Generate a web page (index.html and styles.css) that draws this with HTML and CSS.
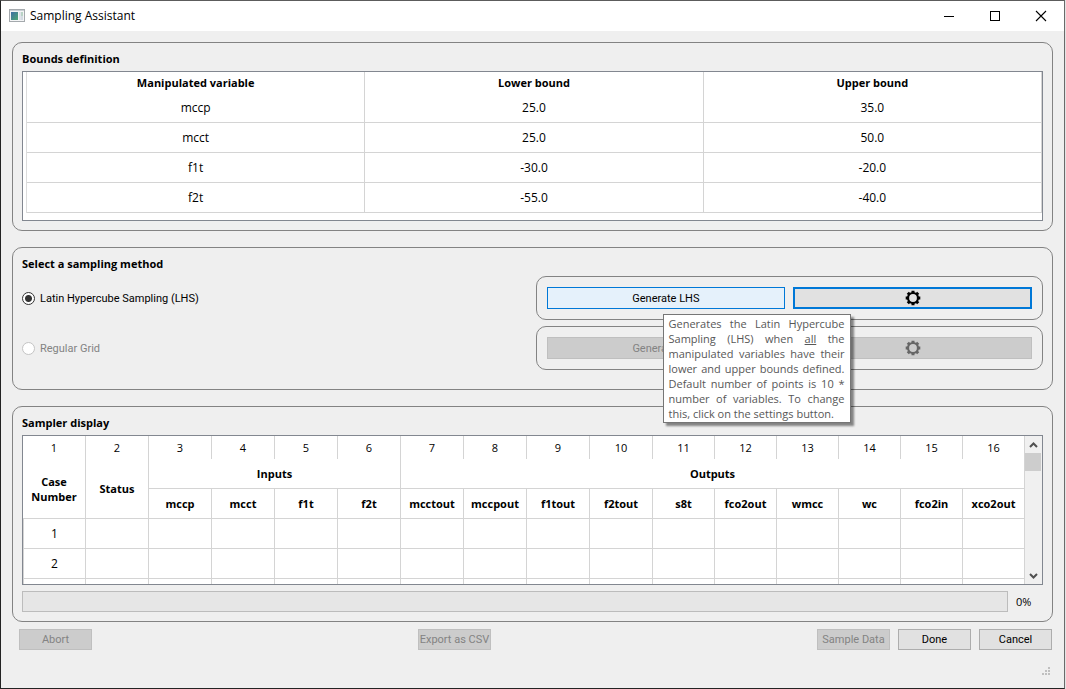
FILE: index.html
```
<!DOCTYPE html>
<html lang="en">
<head>
<meta charset="utf-8">
<title>Sampling Assistant</title>
<link rel="stylesheet" href="styles.css">
</head>
<body>
<div class="window">
  <header class="titlebar">
    <svg class="app-icon" width="16" height="14" viewBox="0 0 16 14" aria-hidden="true">
      <defs><linearGradient id="pane" x1="0" y1="0" x2="1" y2="1"><stop offset="0" stop-color="#3f6fa5"/><stop offset="1" stop-color="#4fa872"/></linearGradient></defs>
      <rect x=".5" y=".5" width="15" height="12" fill="#f4f5f6" stroke="#a4a9ad"/>
      <path d="M1 1.5h14" stroke="#c9cfd4"/>
      <rect x="2" y="3" width="7" height="8" fill="url(#pane)"/>
      <rect x="10" y="3" width="2" height="8" fill="#dfe4ea"/>
      <rect x="12" y="3" width="2" height="4" fill="#b9d3c6"/>
      <rect x="12" y="7" width="2" height="4" fill="#d4dbe3"/>
    </svg>
    <h1 class="title">Sampling Assistant</h1>
    <div class="window-controls">
      <button class="win-btn" aria-label="Minimize"><svg width="12" height="12" viewBox="0 0 12 12"><path d="M1 6.5h10" stroke="#000"/></svg></button>
      <button class="win-btn" aria-label="Maximize"><svg width="12" height="12" viewBox="0 0 12 12"><rect x="1.500" y="1.500" width="9" height="9" fill="none" stroke="#000"/></svg></button>
      <button class="win-btn" aria-label="Close"><svg width="12" height="12" viewBox="0 0 12 12"><path d="M1 1l10 10M11 1L1 11" stroke="#000" stroke-width="1.1"/></svg></button>
    </div>
  </header>

  <main class="content">
    <section class="group">
      <h2 class="group-title">Bounds definition</h2>
      <div class="bounds-view">
        <table class="bounds">
          <thead><tr><th>Manipulated variable</th><th>Lower bound</th><th>Upper bound</th></tr></thead>
          <tbody>
            <tr><td>mccp</td><td>25.0</td><td>35.0</td></tr>
            <tr><td>mcct</td><td>25.0</td><td>50.0</td></tr>
            <tr><td>f1t</td><td>-30.0</td><td>-20.0</td></tr>
            <tr><td>f2t</td><td>-55.0</td><td>-40.0</td></tr>
          </tbody>
        </table>
      </div>
    </section>

    <section class="group group-method">
      <h2 class="group-title">Select a sampling method</h2>
      <div class="methods">
        <div class="method">
          <label class="choice"><input class="radio" type="radio" name="method" checked>Latin Hypercube Sampling (LHS)</label>
          <div class="method-actions">
            <div class="tip-anchor">
              <button class="btn btn-hover" aria-describedby="lhs-tip">Generate LHS</button>
              <div class="tooltip" role="tooltip" id="lhs-tip">Generates the Latin Hypercube Sampling (LHS) when <u>all</u> the manipulated variables have their lower and upper bounds defined. Default number of points is 10 * number of variables. To change this, click on the settings button.</div>
            </div>
            <button class="btn btn-focus" aria-label="LHS settings">
              <svg class="gear" viewBox="0 0 16 16"><circle cx="8" cy="8" r="5" fill="none" stroke="currentColor" stroke-width="2.200"/><path d="M8 .7v2.800M8 12.500v2.800M.7 8h2.800M12.500 8h2.800M2.800 2.800l2 2M11.200 11.200l2 2M2.800 13.200l2-2M11.200 4.800l2-2" stroke="currentColor" stroke-width="3"/></svg>
            </button>
          </div>
        </div>
        <div class="method">
          <label class="choice choice-off"><input class="radio" type="radio" name="method" disabled>Regular Grid</label>
          <div class="method-actions">
            <button class="btn" disabled>Generate Grid</button>
            <button class="btn" disabled aria-label="Grid settings">
              <svg class="gear gear-off" viewBox="0 0 16 16"><circle cx="8" cy="8" r="5" fill="none" stroke="currentColor" stroke-width="2.200"/><path d="M8 .7v2.800M8 12.500v2.800M.7 8h2.800M12.500 8h2.800M2.800 2.800l2 2M11.200 11.200l2 2M2.800 13.200l2-2M11.200 4.800l2-2" stroke="currentColor" stroke-width="3"/></svg>
            </button>
          </div>
        </div>
      </div>
    </section>

    <section class="group group-sampler">
      <h2 class="group-title">Sampler display</h2>
      <div class="sampler-view">
        <div class="sampler-scroll">
          <table class="sampler">
            <colgroup><col class="col-wide" span="10"><col span="6"></colgroup>
            <thead>
              <tr class="numbers"><th>1</th><th>2</th><th>3</th><th>4</th><th>5</th><th>6</th><th>7</th><th>8</th><th>9</th><th>10</th><th>11</th><th>12</th><th>13</th><th>14</th><th>15</th><th>16</th></tr>
              <tr><th rowspan="2">Case Number</th><th rowspan="2">Status</th><th colspan="4">Inputs</th><th colspan="10">Outputs</th></tr>
              <tr><th>mccp</th><th>mcct</th><th>f1t</th><th>f2t</th><th>mcctout</th><th>mccpout</th><th>f1tout</th><th>f2tout</th><th>s8t</th><th>fco2out</th><th>wmcc</th><th>wc</th><th>fco2in</th><th>xco2out</th></tr>
            </thead>
            <tbody>
              <tr><td>1</td><td></td><td></td><td></td><td></td><td></td><td></td><td></td><td></td><td></td><td></td><td></td><td></td><td></td><td></td><td></td></tr>
              <tr><td>2</td><td></td><td></td><td></td><td></td><td></td><td></td><td></td><td></td><td></td><td></td><td></td><td></td><td></td><td></td><td></td></tr>
              <tr><td></td><td></td><td></td><td></td><td></td><td></td><td></td><td></td><td></td><td></td><td></td><td></td><td></td><td></td><td></td><td></td></tr>
            </tbody>
          </table>
        </div>
        <div class="scrollbar">
          <button class="scroll-btn" aria-label="Scroll up"><svg width="9" height="6" viewBox="0 0 9 6"><path d="M1 5l3.500-3.500L8 5" fill="none" stroke="#505050" stroke-width="2"/></svg></button>
          <div class="scroll-track"><div class="scroll-thumb"></div></div>
          <button class="scroll-btn" aria-label="Scroll down"><svg width="9" height="6" viewBox="0 0 9 6"><path d="M1 1l3.500 3.500L8 1" fill="none" stroke="#505050" stroke-width="2"/></svg></button>
        </div>
      </div>
      <div class="progress-row">
        <progress class="progress" id="progress" value="0" max="100"></progress>
        <label class="progress-label" for="progress">0%</label>
      </div>
    </section>

    <div class="footer">
      <button class="btn btn-fixed" disabled>Abort</button>
      <button class="btn btn-fixed" disabled>Export as CSV</button>
      <div class="footer-right">
        <button class="btn btn-fixed" disabled>Sample Data</button>
        <button class="btn btn-fixed">Done</button>
        <button class="btn btn-fixed">Cancel</button>
      </div>
    </div>
  </main>

  <div class="statusbar">
    <svg width="9" height="9" viewBox="0 0 9 9" fill="#bfbfbf" aria-hidden="true"><path d="M6 0h2v2H6zM3 3h2v2H3zM6 3h2v2H6zM0 6h2v2H0zM3 6h2v2H3zM6 6h2v2H6z"/></svg>
  </div>
</div>
</body>
</html>
```
FILE: styles.css
```
* { box-sizing: border-box; }

body {
  margin: 0;
  padding-right: 1px;
  background: #e4e4e4;
  color: #000;
  font: 11px/15px "Open Sans", "Noto Sans", sans-serif;
}

button { font: inherit; color: inherit; }

.window {
  min-height: 100vh;
  display: flex;
  flex-direction: column;
  background: #efefef;
  border: 1px solid #232323;
  border-top-color: #5c5c5c;
  border-right-color: #6a6a6a;
}

/* Title bar */
.titlebar {
  display: flex;
  align-items: center;
  height: 30px;
  padding-left: 8px;
  background: #fff;
}
.title {
  flex: 1;
  margin: 0 0 0 5px;
  font-size: 12px;
  font-weight: 400;
  line-height: 16px;
}
.window-controls { display: flex; height: 100%; }
.win-btn {
  display: flex;
  align-items: center;
  justify-content: center;
  width: 46px;
  padding: 0;
  border: 0;
  background: none;
}

/* Group boxes */
.content { flex: 1; padding: 11px 11px 0; }
.group {
  margin-bottom: 16px;
  padding: 8px 9px;
  border: 1px solid #838383;
  border-radius: 10px;
}
.group-title { margin: 0 0 5px; font-size: 11px; line-height: 15px; }
.group-method { padding-bottom: 19px; }
.group-sampler { margin-bottom: 7px; padding-bottom: 9px; }

table { width: 100%; table-layout: fixed; border-collapse: separate; border-spacing: 0; }
th, td { padding: 0; text-align: center; border: 0 solid #d4d4d4; }

/* Bounds table */
.bounds-view {
  height: 150px;
  margin-bottom: 1px;
  padding-left: 3px;
  background: #fff;
  border: 1px solid #828790;
}
.bounds { border-left: 1px solid #dcdcdc; }
.bounds th { height: 21px; border-right-width: 1px; }
.bounds td { height: 30px; border-width: 0 1px 1px 0; }
.bounds tbody, .sampler tbody { font-size: 12px; }

/* Sampling methods */
.methods { display: grid; gap: 6px; }
.method { display: grid; grid-template-columns: 1fr 1fr; gap: 6px; align-items: center; }
.choice { display: flex; align-items: center; gap: 5px; }
.choice, .btn { font-family: Roboto, "Open Sans", sans-serif; }
.choice-off { color: #838383; }
.radio {
  appearance: none;
  width: 13px;
  height: 13px;
  margin: 0;
  border: 1px solid #333;
  border-radius: 50%;
  background: #fff;
}
.radio:checked { background: radial-gradient(circle, #333 0 3px, #fff 4px); }
.radio:disabled { border-color: #c4c4c4; }
.method-actions {
  display: grid;
  grid-template-columns: 1fr 1fr;
  gap: 8px;
  padding: 10px;
  border: 1px solid #838383;
  border-radius: 10px;
}
.tip-anchor { position: relative; display: grid; }

.btn {
  display: flex;
  align-items: center;
  justify-content: center;
  height: 22px;
  padding: 0;
  border: 1px solid #adadad;
  background: #e1e1e1;
  white-space: nowrap;
}
.btn:disabled { background: #ccc; border-color: #bfbfbf; color: #838383; }
.btn-hover { background: #e5f1fb; border-color: #0078d7; }
.btn-focus { border: 2px solid #0078d7; }
.btn-fixed { width: 73px; }
.gear { width: 16px; height: 16px; }
.gear-off { color: #666; }

.tooltip {
  position: absolute;
  z-index: 1;
  top: 27px;
  left: 116px;
  width: 188px;
  padding: 1px 5px;
  border: 1px solid #767676;
  background: #fff;
  box-shadow: 3px 3px 2px rgba(0, 0, 0, .45);
  color: #575757;
  text-align: justify;
}

/* Sampler table */
.sampler-view {
  display: flex;
  height: 150px;
  background: #fff;
  border: 1px solid #828790;
}
.sampler-scroll { flex: 1; overflow: hidden; }
.col-wide { width: 63px; }
.sampler th, .sampler td { height: 30px; border-width: 0 1px 1px 0; }
.sampler .numbers th { height: 23px; border-bottom-width: 0; font-weight: 400; }
.sampler td:first-child { border-left-width: 1px; }
.scrollbar {
  display: flex;
  flex-direction: column;
  width: 17px;
  padding-right: 1px;
  background: #f0f0f0;
}
.scroll-btn {
  display: flex;
  align-items: center;
  justify-content: center;
  height: 17px;
  padding: 0;
  border: 0;
  background: none;
}
.scroll-track { flex: 1; }
.scroll-thumb { height: 18px; background: #cdcdcd; }

/* Progress */
.progress-row { display: flex; align-items: center; margin-top: 6px; gap: 8px; }
.progress {
  appearance: none;
  flex: 1;
  height: 21px;
  border: 1px solid #bcbcbc;
  background: #e6e6e6;
}
.progress::-webkit-progress-bar { background: #e6e6e6; }
.progress::-webkit-progress-value { background: #06b025; }
.progress-label { width: 27px; }

/* Footer */
.footer { display: flex; justify-content: space-between; padding: 0 1px 0 7px; }
.footer .btn { height: 21px; }
.footer-right { display: flex; gap: 8px; }
.statusbar { display: flex; justify-content: flex-end; padding: 0 13px 12px; }
```
